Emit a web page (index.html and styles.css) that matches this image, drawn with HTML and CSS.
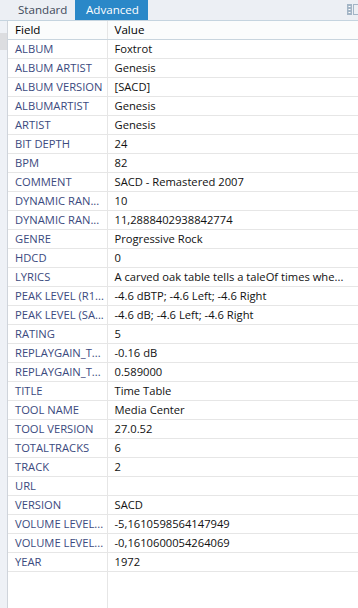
FILE: index.html
```html
<!DOCTYPE html>
<html lang="en">
<head>
  <meta charset="UTF-8">
  <title>Tag Editor</title>
  <link rel="stylesheet" href="styles.css">
</head>
<body>
  <div class="panel">
    <div class="tabs">
      <div class="tab">Standard</div>
      <div class="tab active">Advanced</div>
      <div class="spacer"></div>
      <svg class="cols-icon" width="11" height="11" viewBox="0 0 11 11">
        <rect x="0" y="0" width="5" height="11" fill="#a3b5c6"/>
        <rect x="1.5" y="2" width="2" height="1" fill="#fff"/>
        <rect x="1.5" y="5" width="2" height="1" fill="#fff"/>
        <rect x="1.5" y="8" width="2" height="1" fill="#fff"/>
        <rect x="6.5" y="0.5" width="5" height="10" fill="none" stroke="#a3b5c6"/>
      </svg>
    </div>
    <div class="main">
      <div class="gutter"><div class="gutter-thumb"></div></div>
      <table class="grid">
        <colgroup><col class="c-field"><col></colgroup>
        <thead>
          <tr><th>Field</th><th>Value</th></tr>
        </thead>
        <tbody>
          <tr><td>ALBUM</td><td>Foxtrot</td></tr>
          <tr><td>ALBUM ARTIST</td><td>Genesis</td></tr>
          <tr><td>ALBUM VERSION</td><td>[SACD]</td></tr>
          <tr><td>ALBUMARTIST</td><td>Genesis</td></tr>
          <tr><td>ARTIST</td><td>Genesis</td></tr>
          <tr><td>BIT DEPTH</td><td>24</td></tr>
          <tr><td>BPM</td><td>82</td></tr>
          <tr><td>COMMENT</td><td>SACD - Remastered 2007</td></tr>
          <tr><td>DYNAMIC RAN...</td><td>10</td></tr>
          <tr><td>DYNAMIC RAN...</td><td>11,2888402938842774</td></tr>
          <tr><td>GENRE</td><td>Progressive Rock</td></tr>
          <tr><td>HDCD</td><td>0</td></tr>
          <tr><td>LYRICS</td><td>A carved oak table tells a taleOf times whe...</td></tr>
          <tr><td>PEAK LEVEL (R1...</td><td>-4.6 dBTP; -4.6 Left; -4.6 Right</td></tr>
          <tr><td>PEAK LEVEL (SA...</td><td>-4.6 dB; -4.6 Left; -4.6 Right</td></tr>
          <tr><td>RATING</td><td>5</td></tr>
          <tr><td>REPLAYGAIN_T...</td><td>-0.16 dB</td></tr>
          <tr><td>REPLAYGAIN_T...</td><td>0.589000</td></tr>
          <tr><td>TITLE</td><td>Time Table</td></tr>
          <tr><td>TOOL NAME</td><td>Media Center</td></tr>
          <tr><td>TOOL VERSION</td><td>27.0.52</td></tr>
          <tr><td>TOTALTRACKS</td><td>6</td></tr>
          <tr><td>TRACK</td><td>2</td></tr>
          <tr><td>URL</td><td></td></tr>
          <tr><td>VERSION</td><td>SACD</td></tr>
          <tr><td>VOLUME LEVEL...</td><td>-5,1610598564147949</td></tr>
          <tr><td>VOLUME LEVEL...</td><td>-0,1610600054264069</td></tr>
          <tr><td>YEAR</td><td>1972</td></tr>
          <tr class="filler"><td></td><td></td></tr>
        </tbody>
      </table>
    </div>
  </div>
</body>
</html>
```

FILE: styles.css
```css
body {
  margin: 0;
  font-family: "Open Sans", "Noto Sans", sans-serif;
  font-size: 11.2px;
  background: #fff;
}
.panel {
  display: flex;
  flex-direction: column;
  height: 608px;
  overflow: hidden;
}
.tabs {
  display: flex;
  align-items: stretch;
  height: 20px;
  background: #eceff4;
  border-bottom: 1px solid #c5d4df;
  flex-shrink: 0;
}
.tab {
  box-sizing: border-box;
  width: 75px;
  padding-left: 18px;
  line-height: 19px;
  font-size: 11.6px;
  color: #3f4a5a;
}
.tab.active {
  width: 73px;
  padding-left: 11px;
  background: #2a88c8;
  color: #fff;
}
.spacer {
  flex: 1;
}
.cols-icon {
  margin-top: 4px;
}
.main {
  flex: 1;
  display: flex;
}
.gutter {
  width: 7px;
  background: #eef1f6;
  border-right: 1px solid #cfd4db;
  flex-shrink: 0;
  padding-top: 12px;
}
.gutter-thumb {
  height: 17px;
  background: #dcdde0;
}
.grid {
  flex: 1;
  width: 100%;
  border-collapse: collapse;
  table-layout: fixed;
  height: 100%;
}
.c-field {
  width: 99px;
}
.grid th,
.grid td {
  height: 18px;
  padding: 0 4px 0 7px;
  text-align: left;
  font-weight: normal;
  white-space: nowrap;
  overflow: hidden;
  border-bottom: 1px solid #e6e6e6;
  border-right: 1px solid #e6e6e6;
  line-height: 18px;
  color: #111;
}
.grid th {
  background: #fbfcfc;
  border-bottom-color: #c9d5de;
  color: #000;
  font-size: 11.6px;
}
.grid th:last-child,
.grid td:last-child {
  border-right: none;
}
.grid td:first-child {
  color: #3b4a7e;
}
.grid .filler td {
  height: auto;
  border-bottom: none;
}
```
